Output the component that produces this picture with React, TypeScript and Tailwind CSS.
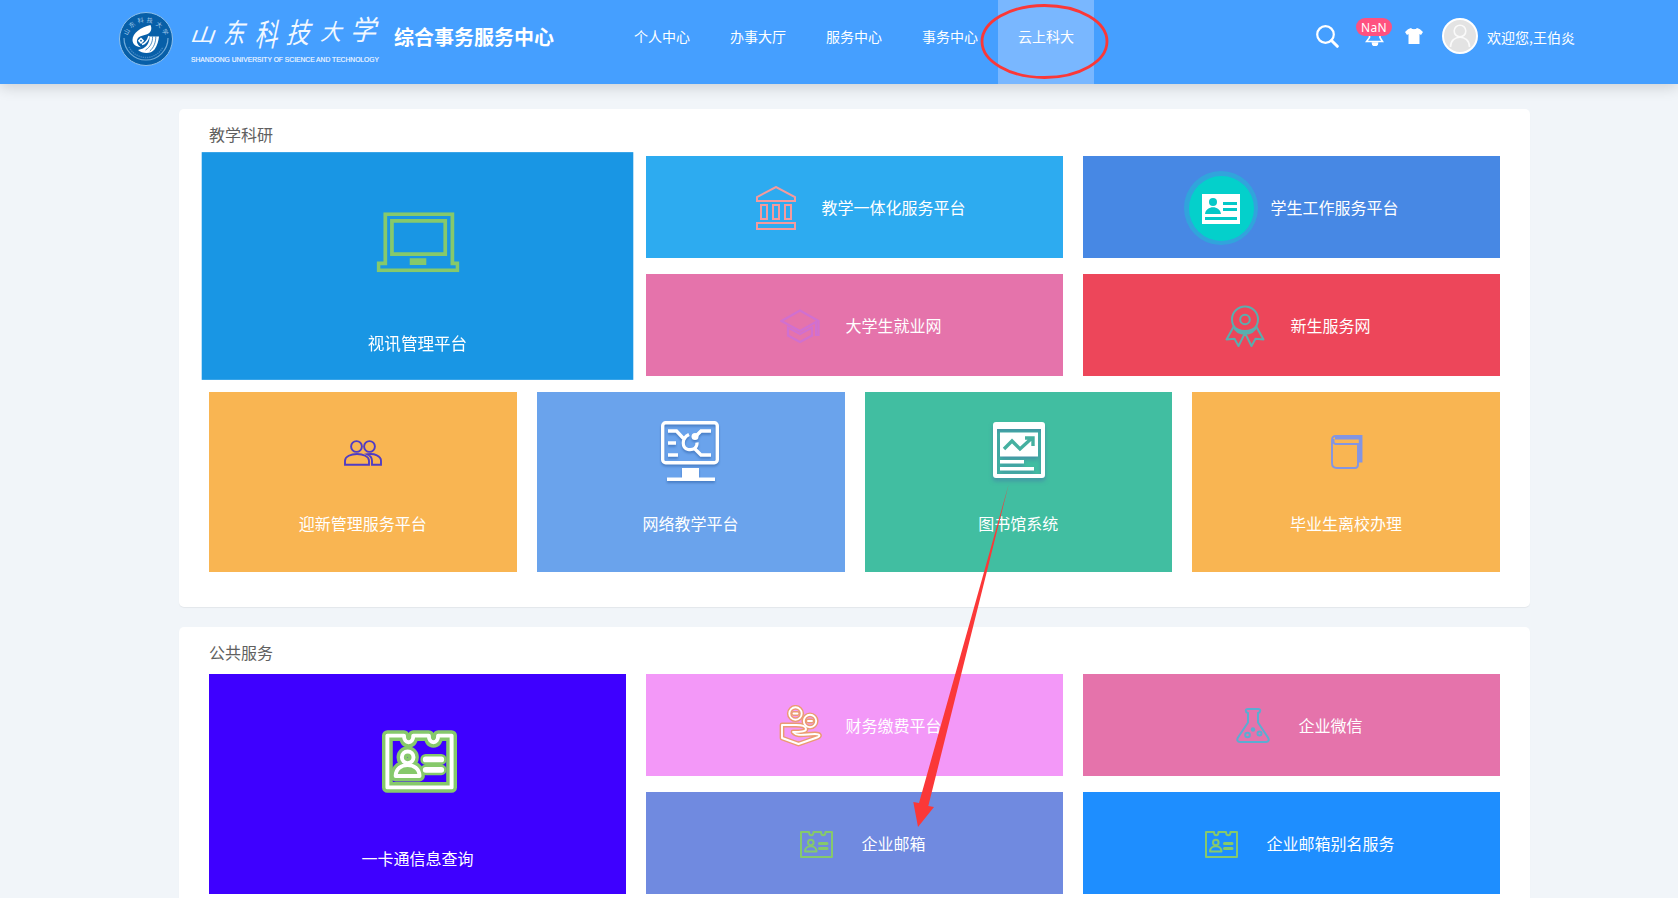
import type { ReactNode } from "react";

const navItems = ["个人中心", "办事大厅", "服务中心", "事务中心", "云上科大"];

function Emblem() {
  return (
    <svg className="h-[54px] w-[54px] overflow-visible" viewBox="0 0 54 54" fill="none">
      <circle cx="27" cy="27" r="26.500" fill="#075fa8" stroke="#8fc0ea" strokeWidth="1" />
      <path d="M5 26 A22 22 0 0 0 49 26" stroke="#6fa9d8" strokeWidth="1.200" />
      <path d="M10 35 A19 19 0 0 0 44 35" stroke="#3f86c4" strokeWidth="1.400" strokeDasharray="1.4 0.8" />
      <g fill="#a9cdec" fontSize="6" fontFamily="'Noto Sans CJK SC', sans-serif">
        <text x="5" y="22" transform="rotate(-62 8 20)">山</text>
        <text x="10" y="15" transform="rotate(-35 13 13)">东</text>
        <text x="18.500" y="10.500" transform="rotate(-10 21 8)">科</text>
        <text x="28" y="10.500" transform="rotate(10 31 8)">技</text>
        <text x="37" y="15" transform="rotate(36 40 13)">大</text>
        <text x="43" y="22" transform="rotate(62 46 20)">学</text>
      </g>
      <path d="M31.500 13C22 15 13.500 21 13.500 28c0 4.500 4 7 8.500 7.200-3-1.700-4.800-4.700-3.800-7.700C20 23 26 23.800 29.500 21.500c3-2 3.500-5.500 2-8.500z" fill="#fff" />
      <path d="M22 25.500l3.200 3.200L22 32l-3.200-3.300z" fill="#fff" />
      <circle cx="22" cy="28.700" r=".9" fill="#075fa8" />
      <path d="M40 24.500h-9.500c.5 5-2.500 10-6.500 12l-5 1.500c4 3.500 12.500 4.500 16.500-.5 3-4 4-9 4.500-13z" fill="#fff" />
      <path d="M33.500 24.500c.5 5-2 10.500-7 13.500M36.800 24.500c0 6-2 11-6 14.500" stroke="#075fa8" strokeWidth=".7" />
      <path d="M23 32.500c4-1 6-5 7-8.500" stroke="#fff" strokeWidth="1.500" />
    </svg>
  );
}

function Wordmark() {
  return (
    <svg className="h-[52px] w-[191px] overflow-visible" viewBox="0 0 191 52" fill="#f2f8ff">
      <g fontFamily="'Noto Sans CJK SC', sans-serif" fontWeight="400" fontSize="24">
        <text transform="translate(-1 29.500) skewX(-20) scale(1.05 .78)">山</text>
        <text transform="translate(33 30.500) skewX(-14) scale(.88 1.15)">东</text>
        <text transform="translate(64.500 34) skewX(-12) scale(.95 1.3)">科</text>
        <text transform="translate(95.500 31) skewX(-16) scale(.98 1.18)">技</text>
        <text transform="translate(130 27.500) skewX(-16) scale(.88 .95)">大</text>
        <text transform="translate(160 28) skewX(-14) scale(1.08 1.15)">学</text>
      </g>
      <text x="1" y="49.500" fontSize="6.600" fontWeight="400" stroke="#f2f8ff" strokeWidth=".15" fontFamily="'Liberation Sans', sans-serif" textLength="188" lengthAdjust="spacingAndGlyphs">
        SHANDONG UNIVERSITY OF SCIENCE AND TECHNOLOGY
      </text>
    </svg>
  );
}

function Header() {
  return (
    <header className="flex h-[84px] bg-[#459fff] pl-[119px] text-white shadow-[0_3px_14px_rgba(0,0,0,0.16)]">
      <div className="flex w-[495px] shrink-0 pt-3">
        <Emblem />
        <div className="ml-[17px]">
          <Wordmark />
        </div>
        <h1 className="ml-[13px] mt-[10px] text-[20px] font-bold leading-[30px]">综合事务服务中心</h1>
      </div>
      <nav className="flex">
        {navItems.map((item) => (
          <a key={item} className={item === "云上科大" ? "relative w-24 bg-[#79b7ff] text-center text-sm leading-[72px]" : "w-24 text-center text-sm leading-[72px]"}>
            {item}
            {item === "云上科大" && (
              <svg className="absolute -left-[18px] top-[3px] z-10 h-[77px] w-[130px]" viewBox="0 0 130 77" fill="none">
                <ellipse cx="64.500" cy="38.500" rx="62.500" ry="36" stroke="#fb3838" strokeWidth="2.800" />
              </svg>
            )}
          </a>
        ))}
      </nav>
      <div className="ml-[222px] flex">
        <svg className="mt-[24px] h-6 w-6" viewBox="0 0 24 24" fill="none" stroke="#fff">
          <circle cx="9.500" cy="10.500" r="8.300" strokeWidth="2.200" />
          <path d="M15.500 16.500l5.800 5.800" strokeWidth="3" strokeLinecap="round" />
        </svg>
        <div className="relative ml-[25px] mt-[26px] h-5 w-5">
          <svg className="h-5 w-5" viewBox="0 0 20 20" fill="none" stroke="#fff" strokeWidth="1.600">
            <path d="M4.500 8v3.500L1.500 15.500h16l-2.500-4V8a5.500 5.500 0 0 0-11 0z" />
            <path d="M7.500 17h5a2.500 2.500 0 0 1-5 0z" fill="#fff" />
          </svg>
          <span className="absolute -left-[9px] -top-[8px] h-[18px] w-9 rounded-full bg-[#ff5180] text-center font-['Noto_Sans'] text-xs leading-[19px] tracking-[0.3px]">NaN</span>
        </div>
        <svg className="ml-[20px] mt-[28px] h-4 w-[18px]" viewBox="0 0 18 16" fill="#fff">
          <path d="M6 0c1.200 1.600 4.800 1.600 6 0l3 1.200L18 4l-2 3-1.500-.9V16h-11V6.100L2 7 0 4l3-2.800z" />
        </svg>
        <svg className="ml-[19px] mt-[18px] h-9 w-9" viewBox="0 0 36 36" fill="none">
          <circle cx="18" cy="18" r="17" fill="#e3e3e3" stroke="#fff" strokeWidth="2" />
          <circle cx="18" cy="13" r="5.800" stroke="#fafafa" strokeWidth="1.600" />
          <path d="M8.500 29c0-13 19-13 19 0" stroke="#fafafa" strokeWidth="1.600" />
        </svg>
        <span className="ml-[9px] text-sm leading-[74px]">欢迎您,王伯炎</span>
      </div>
    </header>
  );
}

function LaptopIcon() {
  return (
    <svg className="mt-[2px] h-[58px] w-[80px]" viewBox="0 0 80 58" fill="none" stroke="#86c96b" strokeWidth="3.600">
      <path d="M8.400 49.500V1.800h64.800v47.700h5v6.700H1.800v-6.700z" />
      <path d="M14.800 8.500h51.500v32H14.800z" />
      <path d="M32 44.500h16v6.500H32z" fill="#86c96b" stroke="none" />
    </svg>
  );
}

function MuseumIcon() {
  return (
    <svg className="mt-[2px] h-[44px] w-[40px]" viewBox="0 0 40 44" fill="none" stroke="#f59a9c" strokeWidth="2">
      <path d="M1 15v-4L20 1l19 10v4zM5 19h6v14H5zM17 19h6v14h-6zM29 19h6v14h-6zM1 37h38v6H1z" />
    </svg>
  );
}

function CapIcon() {
  return (
    <svg className="mt-px h-[34px] w-[40px]" viewBox="0 0 40 34" fill="none" stroke="#d070d0" strokeWidth="2.200">
      <path d="M1.500 12L20 1.500 38.500 12v14H36V13L20 22z" />
      <path d="M8 18.500v8L20 33l12-6.500v-8L20 25z" />
    </svg>
  );
}

function IdBadgeIcon() {
  return (
    <svg className="mt-[2px] h-[74px] w-[74px]" viewBox="0 0 74 74">
      <circle cx="37" cy="37" r="37" fill="#31a4dc" />
      <circle cx="37.500" cy="37.500" r="32.500" fill="#04d0cb" />
      <path d="M18 23h38v30H18z" fill="#fff" />
      <g fill="#04c8c8">
        <circle cx="29" cy="31" r="4" />
        <path d="M21 43c1-9 15-9 16 0zM39 31h14v3H39zM39 37h14v3H39zM21 46h32v3H21z" />
      </g>
    </svg>
  );
}

function RibbonIcon() {
  return (
    <svg className="mt-px h-[42px] w-[40px]" viewBox="0 0 40 42" fill="none" stroke="#5aaeae" strokeWidth="2" strokeLinejoin="round">
      <circle cx="20" cy="14.500" r="13" />
      <circle cx="20" cy="14.500" r="4.800" />
      <path d="M8.500 22L1.500 34.500l8-.8 4 7.300L20 28l6.500 13 4-7.300 8 .8L31.500 22" />
      <path d="M8.500 21.500c4 9.500 19 9.500 23 0-5 6-18 6-23 0z" fill="#5aaeae" />
    </svg>
  );
}

function PeopleIcon() {
  return (
    <svg className="mt-[3px] h-[26px] w-[38px]" viewBox="0 0 38 26" fill="none" stroke="#503cc4" strokeWidth="1.900">
      <circle cx="12.500" cy="6.500" r="5.400" />
      <circle cx="25.500" cy="6.500" r="5.400" />
      <path d="M1 24.800v-4c0-9 24-9 24 0v4zM23.500 14.300c7-1 13.500 1.500 13.500 6.500v4h-9v-4c0-3-1-5-4.500-6.500z" />
    </svg>
  );
}

function MonitorIcon() {
  return (
    <svg className="mr-px mt-px h-[62px] w-[58px] drop-shadow-[0_2px_1px_rgba(40,90,160,0.5)]" viewBox="0 0 58 62" fill="none" stroke="#fff">
      <rect x="1.700" y="1.700" width="54.600" height="40" rx="3" strokeWidth="3.400" />
      <path d="M7 10h8.500l7 7.500M7 22h8M7 34h10M50 10H40l-5 5M50 34H40l-7-7" strokeWidth="3.400" />
      <path d="M28 13.500c-8 4-7 13.500-1 15 5.500 1 9.500-2 9-7" strokeWidth="3.200" />
      <circle cx="34" cy="15.500" r="3.500" fill="#fff" stroke="none" />
      <path d="M21 47h17v9.500h16V60H6v-3.500h15z" fill="#fff" stroke="none" />
    </svg>
  );
}

function ReportIcon() {
  return (
    <svg className="-mt-[4px] ml-px h-[56px] w-[52px] drop-shadow-[0_3px_2px_rgba(70,110,170,0.55)]" viewBox="0 0 52 56" fill="#fff">
      <path fillRule="evenodd" d="M3 0h46q3 0 3 3v50q0 3-3 3H3q-3 0-3-3V3q0-3 3-3zm1 7v45h44V7z" />
      <path d="M7 10.500h38v24H7zM7 38h24v3.500H7zM7 45h34v3.500H7z" />
      <path d="M11 27l8-8 8 8 12-11M32 16h8v8" stroke="#45b0a0" strokeWidth="3.400" fill="none" />
    </svg>
  );
}

function BookIcon() {
  return (
    <svg className="ml-px mt-px h-[34px] w-[32px]" viewBox="0 0 32 34" fill="none" stroke="#8295e4" strokeWidth="1.900">
      <path d="M4 9h23v20.500q0 3.500-3 3.500H6q-5 0-5-5V5q0-4 4-4h25.500v25.500H27" />
      <path d="M4 1.500h26.500v25H27.800V4.500H4z" fill="#8295e4" stroke="none" />
      <path d="M2.500 4v2.500q0 2.500 2.500 2.500" />
    </svg>
  );
}

function TicketShape() {
  return (
    <>
      <path d="M2.500 1H9c0 4.300 4.500 4.300 4.500 0H21c0 4.300 4.500 4.300 4.500 0H32v25H1V1z" strokeLinejoin="round" />
      <circle cx="10.800" cy="11.500" r="2.800" />
      <path d="M5 20.500c0-7 11.500-7 11.500 0z" strokeLinejoin="round" />
      <path d="M19.500 12.500h7.500M19.500 17.500h7.500" strokeLinecap="round" />
    </>
  );
}

function TicketIcon() {
  return (
    <svg className="mt-[3px] h-[27px] w-[33px]" viewBox="0 0 33 27" fill="none" stroke="#86c96b" strokeWidth="2">
      <TicketShape />
      <path d="M19.500 12.500h7.500M19.500 17.500h7.500" strokeWidth="3" strokeLinecap="round" />
    </svg>
  );
}

function GlowTicketIcon() {
  return (
    <svg className="ml-[3px] mt-[3px] h-[63px] w-[75px]" viewBox="-1.600 -1.600 36.200 30.200" fill="none">
      <g stroke="#86c96b" strokeWidth="5.200" strokeLinejoin="round"><TicketShape /></g>
      <g stroke="#fff" strokeWidth="1.900" strokeLinejoin="round"><TicketShape /></g>
      <path d="M19.500 12.500h7.500M19.500 17.500h7.500" stroke="#fff" strokeWidth="2.800" strokeLinecap="round" />
    </svg>
  );
}

function HandShape() {
  return (
    <>
      <circle cx="16.500" cy="8.500" r="6.200" />
      <circle cx="31" cy="16" r="6.200" />
      <path d="M14.500 8.500h4M29 16h4" />
      <path d="M3 20h14c6 0 10 1.500 10 4s-4 3-13 3c4 5 13 2 22 2 5 0 6 2 2 3.500L19.500 39 3 33z" />
    </>
  );
}

function HandCoinsIcon() {
  return (
    <svg className="mt-[2px] h-[42px] w-[43px]" viewBox="0 0 43 42" fill="none" strokeLinejoin="round" strokeLinecap="round">
      <g stroke="#eb9b72" strokeWidth="4.800"><HandShape /></g>
      <g stroke="#fff" strokeWidth="1.900"><HandShape /></g>
    </svg>
  );
}

function FlaskIcon() {
  return (
    <svg className="mt-px h-[35px] w-[34px]" viewBox="0 0 34 35" fill="none" stroke="#5badd2" strokeWidth="2" strokeLinejoin="round">
      <path d="M12 5c-3-1-3-4 0-4h10c3 0 3 3 0 4v9.500l10 15c1.500 2.500.5 4.500-2 4.500H4c-2.500 0-3.500-2-2-4.500l10-15z" />
      <circle cx="11.500" cy="27" r="2.300" />
      <circle cx="23.500" cy="25.500" r="2" />
      <circle cx="17" cy="21.500" r="2.200" fill="#5badd2" stroke="none" />
    </svg>
  );
}

function WideTile({ color, icon, label, labelSpacing = "ml-[5px] mr-[7px]" }: { color: string; icon: ReactNode; label: string; labelSpacing?: string }) {
  return (
    <a className={`flex h-[102px] items-center justify-center text-base text-white ${color}`}>
      <span className="flex w-20 shrink-0 justify-center">{icon}</span>
      <span className={labelSpacing}>{label}</span>
    </a>
  );
}

function TallTile({ color, icon, label }: { color: string; icon: ReactNode; label: string }) {
  return (
    <a className={`flex h-[180px] flex-col items-center text-base text-white ${color}`}>
      <span className="flex h-[119px] items-center">{icon}</span>
      <span className="leading-6">{label}</span>
    </a>
  );
}

function BigTile({ color, icon, label }: { color: string; icon: ReactNode; label: string }) {
  return (
    <a className={`row-span-2 flex h-[220px] flex-col items-center text-base text-white ${color}`}>
      <span className="flex h-[172px] items-center">{icon}</span>
      <span className="leading-6">{label}</span>
    </a>
  );
}

function Section({ title, children }: { title: string; children: ReactNode }) {
  return (
    <section className="h-[498px] rounded-[5px] bg-white px-[30px] pt-[13px] shadow-[0_1px_1px_rgba(0,0,0,0.06)]">
      <h2 className="mb-2.5 text-base leading-6 text-[#606060]">{title}</h2>
      {children}
    </section>
  );
}

function PointerArrow() {
  return (
    <svg className="pointer-events-none absolute left-[900px] top-[480px] h-[350px] w-[120px]" viewBox="900 480 120 350">
      <path d="M1008.500 485L928.300 806l5.700 1-16 20-4.700-25 5.700 1z" fill="#fb3838" />
    </svg>
  );
}

export default function App() {
  return (
    <div className="relative h-[898px] overflow-hidden bg-[#f1f5f9] font-['Noto_Sans_CJK_SC',sans-serif]">
      <Header />
      <main className="ml-[179px] mt-[25px] flex w-[1351px] flex-col gap-5">
        <Section title="教学科研">
          <div className="grid grid-cols-3 gap-x-5 gap-y-4">
            <div className="row-span-2 scale-[1.035]">
              <BigTile color="bg-[#1996e4]" icon={<LaptopIcon />} label="视讯管理平台" />
            </div>
            <WideTile color="bg-[#2dabf0]" icon={<MuseumIcon />} label="教学一体化服务平台" />
            <WideTile color="bg-[#4788e4]" icon={<IdBadgeIcon />} label="学生工作服务平台" labelSpacing="ml-[9px] mr-[3px]" />
            <WideTile color="bg-[#e573ab]" icon={<CapIcon />} label="大学生就业网" />
            <WideTile color="bg-[#ed465a]" icon={<RibbonIcon />} label="新生服务网" />
          </div>
          <div className="mt-4 grid grid-cols-4 gap-x-5">
            <TallTile color="bg-[#f9b552]" icon={<PeopleIcon />} label="迎新管理服务平台" />
            <TallTile color="bg-[#6aa3ec]" icon={<MonitorIcon />} label="网络教学平台" />
            <TallTile color="bg-[#41bea1]" icon={<ReportIcon />} label="图书馆系统" />
            <TallTile color="bg-[#f9b552]" icon={<BookIcon />} label="毕业生离校办理" />
          </div>
        </Section>
        <Section title="公共服务">
          <div className="grid grid-cols-3 gap-x-5 gap-y-4">
            <BigTile color="bg-[#3e00ff]" icon={<GlowTicketIcon />} label="一卡通信息查询" />
            <WideTile color="bg-[#f398f8]" icon={<HandCoinsIcon />} label="财务缴费平台" />
            <WideTile color="bg-[#e573ab]" icon={<FlaskIcon />} label="企业微信" />
            <WideTile color="bg-[#708ae0]" icon={<TicketIcon />} label="企业邮箱" />
            <WideTile color="bg-[#1e8eff]" icon={<TicketIcon />} label="企业邮箱别名服务" />
          </div>
        </Section>
      </main>
      <PointerArrow />
    </div>
  );
}
